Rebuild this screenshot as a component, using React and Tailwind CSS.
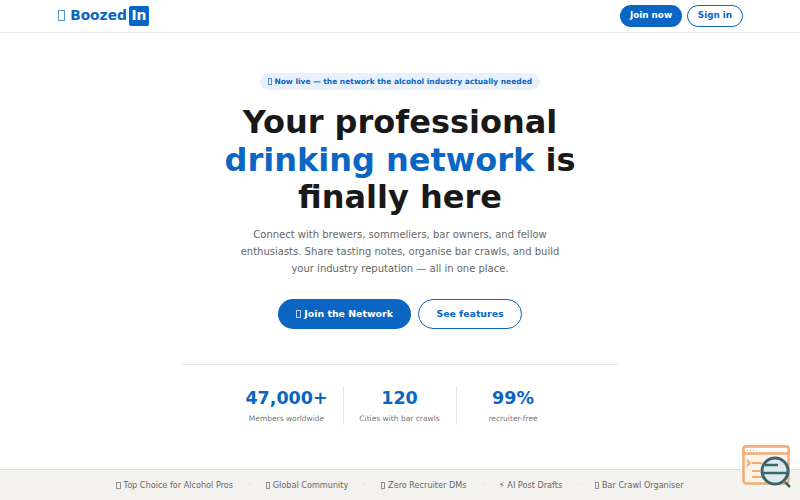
import React from 'react'

const stats = [
  { value: '47,000+', label: 'Members worldwide' },
  { value: '120', label: 'Cities with bar crawls' },
  { value: '99%', label: 'recruiter-free' }
]

const perks = [
  { icon: true, text: 'Top Choice for Alcohol Pros' },
  { icon: true, text: 'Global Community' },
  { icon: true, text: 'Zero Recruiter DMs' },
  { icon: false, text: '⚡ AI Post Drafts' },
  { icon: true, text: 'Bar Crawl Organiser' }
]

// the emoji in the page show as empty "missing glyph" boxes
const Tofu = () => (
  <span className="inline-block w-[0.52em] h-[0.82em] mr-[0.36em] align-[-0.1em] border border-current opacity-70" />
)

const HelpWidget = () => (
  <svg className="fixed left-[742px] top-[445px]" width="50" height="47" viewBox="0 0 50 47" fill="none">
    <rect x="1.5" y="1.5" width="45" height="37" rx="3" fill="#fdf3e8" stroke="#f2ac75" strokeWidth="2.5" />
    <rect x="1.5" y="1.5" width="45" height="7" rx="2" fill="#fff" stroke="#f2ac75" strokeWidth="2.5" />
    <path d="M5 5h1M8 5h1M11 5h1" stroke="#f2ac75" strokeWidth="1.5" />
    <path d="M5 15l3 3-3 3M10 18h10M10 26h8M10 32h10" stroke="#f2ac75" strokeWidth="2" />
    <circle cx="33" cy="26" r="13" fill="#dfe9ee" stroke="#37686f" strokeWidth="3" />
    <path d="M23 20h13M20 28h26M43 37l5 5" stroke="#37686f" strokeWidth="2.5" />
  </svg>
)

export default function App() {
  return (
    <div className="h-[500px] flex flex-col overflow-hidden bg-white font-['DejaVu_Sans',sans-serif]">
      <nav className="h-[33px] shrink-0 flex items-center justify-between px-[57px] border-b border-[#e8e8e8]">
        <div className="flex items-center gap-[2px] text-[13.8px] leading-none font-bold text-[#0a66c2]">
          <span className="pl-[1px]"><Tofu />Boozed</span>
          <span className="h-[20px] w-[20px] rounded-[2px] bg-[#0a66c2] text-white flex items-center justify-center">In</span>
        </div>
        <div className="flex items-center gap-[5px] text-[8.8px] font-bold">
          <button className="h-[22px] w-[62px] rounded-full bg-[#0a66c2] text-white">Join now</button>
          <button className="h-[22px] w-[56px] rounded-full border border-[#0a66c2] text-[#0a66c2]">Sign in</button>
        </div>
      </nav>

      <main className="flex-1 flex flex-col items-center pt-[40px]">
        <div className="h-[17px] w-[280px] flex items-center justify-center rounded-full bg-[#e8f1fb] text-[7.5px] font-bold text-[#0a66c2]">
          <span><Tofu />Now live — the network the alcohol industry actually needed</span>
        </div>
        <h1 className="mt-[14px] w-[400px] text-center text-[32px] leading-[37.6px] font-bold text-[#191919]">
          Your professional <span className="text-[#0a66c2]">drinking network</span> is finally here
        </h1>
        <p className="mt-[9px] w-[330px] text-center text-[10px] leading-[17px] text-[#666666]">
          Connect with brewers, sommeliers, bar owners, and fellow enthusiasts. Share tasting notes, organise bar crawls, and build your industry reputation — all in one place.
        </p>
        <div className="mt-[22px] flex gap-[7px] text-[9.4px] font-bold">
          <button className="h-[30px] w-[133px] rounded-full bg-[#0a66c2] text-white"><Tofu />Join the Network</button>
          <button className="h-[30px] w-[104px] rounded-full border border-[#0a66c2] text-[#0a66c2]">See features</button>
        </div>
        <div className="mt-[35px] w-[436px] border-t border-[#e8e8e8] pt-[21px] flex justify-center">
          {stats.map((s, i) => (
            <div key={s.label} className={`w-[113px] h-[39px] pt-[1px] flex flex-col items-center ${i < 2 ? 'border-r border-[#e8e8e8]' : ''}`}>
              <div className="text-[17.5px] leading-[22px] font-bold text-[#0a66c2]">{s.value}</div>
              <div className="mt-[4px] text-[7.5px] leading-[12px] text-[#777777]">{s.label}</div>
            </div>
          ))}
        </div>
      </main>

      <footer className="h-[31px] shrink-0 flex items-center justify-center gap-[15px] border-t border-[#e0dfdc] bg-[#f3f2ef] text-[8.15px] text-[#666666]">
        {perks.map((p, i) => (
          <React.Fragment key={p.text}>
            {i > 0 && <span className="text-[#cccccc]">·</span>}
            <span>{p.icon && <Tofu />}{p.text}</span>
          </React.Fragment>
        ))}
      </footer>
      <HelpWidget />
    </div>
  )
}
